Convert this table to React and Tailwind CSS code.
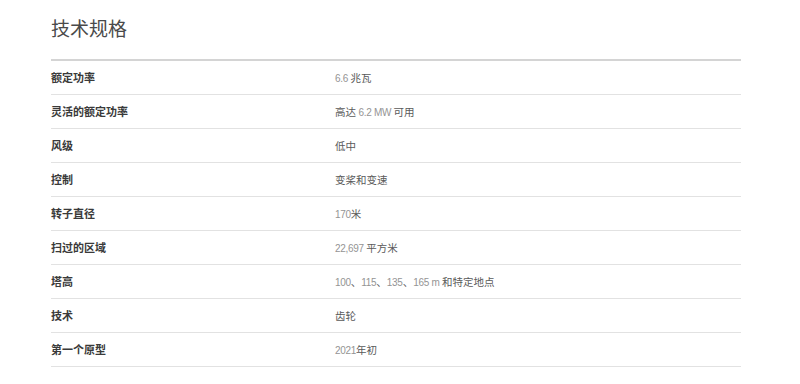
function Value({ text }) {
  const parts = text.split(/([\u3000-\u303f\u4e00-\u9fff\uff00-\uffef]+)/).filter(Boolean);
  return (
    <div className="flex items-baseline whitespace-pre">
      {parts.map((p, i) =>
        /[\u3000-\u303f\u4e00-\u9fff\uff00-\uffef]/.test(p) ? (
          <span key={i} className="text-[10.5px] text-[#5a5a5a]" style={{ fontFamily: '"Noto Sans CJK SC", sans-serif' }}>{p}</span>
        ) : (
          <span key={i} className="text-[10px] tracking-[-0.3px] text-[#949494]" style={{ fontFamily: '"Liberation Sans", Arial, sans-serif' }}>{p}</span>
        )
      )}
    </div>
  );
}

export default function App() {
  const rows = [
    ["额定功率", "6.6 兆瓦"],
    ["灵活的额定功率", "高达 6.2 MW 可用"],
    ["风级", "低中"],
    ["控制", "变桨和变速"],
    ["转子直径", "170米"],
    ["扫过的区域", "22,697 平方米"],
    ["塔高", "100、115、135、165 m 和特定地点"],
    ["技术", "齿轮"],
    ["第一个原型", "2021年初"],
  ];
  return (
    <div className="w-[800px] h-[384px] bg-white overflow-hidden" style={{ fontFamily: '"Noto Sans CJK SC", sans-serif' }}>
      <div className="ml-[51px] w-[690px]">
        <h2 className="pt-[14px] h-[59px] text-[19px] leading-[27px] text-[#4a4a4a] font-normal">技术规格</h2>
        <div className="border-t-2 border-[#d4d4d4]">
          {rows.map(([k, v]) => (
            <div key={k} className="flex items-center h-[34px] border-b border-[#e2e2e2]">
              <div className="w-[284px] text-[11px] font-bold text-[#3a3a3a]">{k}</div>
              <Value text={v} />
            </div>
          ))}
        </div>
      </div>
    </div>
  );
}
